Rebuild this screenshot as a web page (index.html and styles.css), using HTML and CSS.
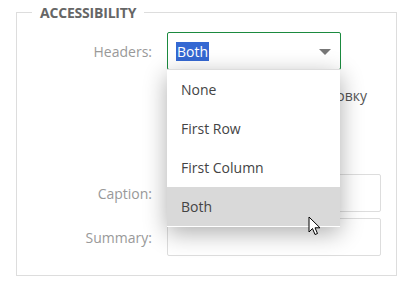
FILE: index.html
```html
<!DOCTYPE html>
<html>
<head>
    <title>Table Properties</title>
    <link rel="stylesheet" href="styles.css">
</head>
<body>
    <fieldset class="group">
        <legend>ACCESSIBILITY</legend>

        <div class="row">
            <label>Headers:</label>
            <div class="select-wrap">
                <div class="select">
                    <span class="select-value">Both</span>
                    <span class="select-arrow"></span>
                </div>
                <ul class="dropdown">
                    <li>None</li>
                    <li>First Row</li>
                    <li>First Column</li>
                    <li class="hover">Both</li>
                </ul>
                <!-- mouse pointer -->
                <svg class="pointer" width="14" height="21" viewBox="0 0 14 21">
                    <path d="M1 1 L1 16 L4.5 12.5 L7 18.5 L9.5 17.5 L7 11.8 L12 11.8 Z" fill="#fff" stroke="#000" stroke-width="1" stroke-linejoin="round"/>
                </svg>
            </div>
        </div>

        <div class="note">сортировку</div>

        <div class="row row-input">
            <label>Caption:</label>
            <input type="text" class="field">
        </div>

        <div class="row row-input">
            <label>Summary:</label>
            <input type="text" class="field">
        </div>
    </fieldset>
</body>
</html>
```

FILE: styles.css
```css
* {
    box-sizing: border-box;
}

body {
    margin: 0;
    background: #fff;
    font-family: 'Open Sans', 'Noto Sans', sans-serif;
    font-size: 14px;
    color: #444;
}

.group {
    margin: 3px 0 0 16px;
    width: 381px;
    height: 273px;
    border: 1px solid #ddd;
    padding: 10px 15px 0 15px;
}

.group legend {
    padding: 0 8px;
    font-size: 14px;
    font-weight: 700;
    color: #666;
    letter-spacing: -0.2px;
}

.row {
    display: grid;
    grid-template-columns: 120px 1fr;
    column-gap: 15px;
    align-items: center;
}

.row label {
    text-align: right;
    color: #999;
}

.row-input {
    margin-top: 6px;
}

.select-wrap {
    position: relative;
    width: 174px;
}

.select {
    height: 38px;
    border: 1px solid #1b8a3f;
    border-radius: 2px;
    display: flex;
    align-items: center;
    justify-content: space-between;
    padding: 0 9px 0 8px;
}

.select-value {
    background: #3468d2;
    color: #fff;
    padding: 0 1px;
    line-height: 19px;
}

.select-arrow {
    border-left: 6px solid transparent;
    border-right: 6px solid transparent;
    border-top: 6px solid #777;
    margin-top: 1px;
}

.dropdown {
    position: absolute;
    top: 37px;
    left: 0;
    width: 173px;
    margin: 0;
    padding: 0 0 1px;
    list-style: none;
    background: #fff;
    border-top: 1px solid #ddd;
    box-shadow: 0 6px 22px rgba(0, 0, 0, 0.32);
    z-index: 2;
}

.dropdown li {
    height: 39px;
    line-height: 39px;
    padding-left: 14px;
    color: #444;
}

.dropdown li.hover {
    background: #d9d9d9;
}

.pointer {
    position: absolute;
    left: 141px;
    top: 184px;
    z-index: 3;
}

.note {
    display: flex;
    justify-content: flex-end;
    margin: 16px 0 0;
    padding-right: 14px;
    height: 20px;
    line-height: 20px;
    color: #555;
}

.note + .row-input {
    margin-top: 68px;
}

.field {
    height: 38px;
    border: 1px solid #ddd;
    border-radius: 2px;
    width: 100%;
}
```
